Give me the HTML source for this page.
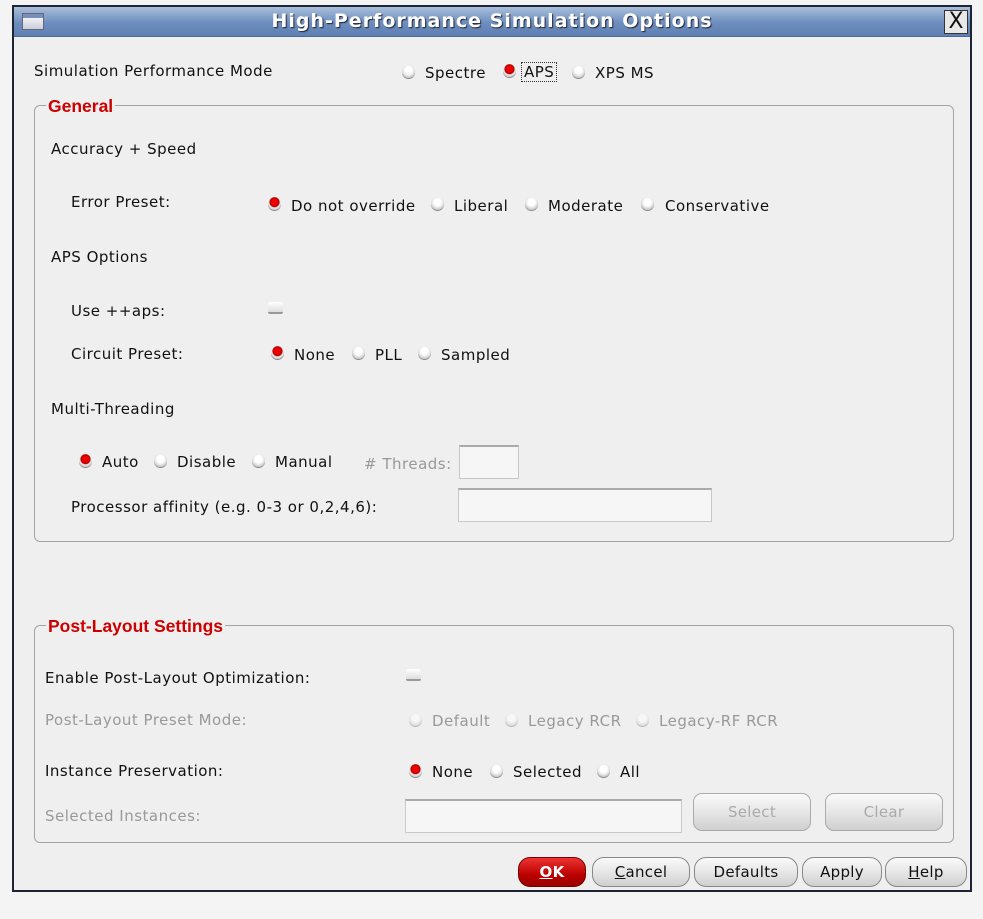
<!DOCTYPE html>
<html><head><meta charset="utf-8"><style>
*{box-sizing:border-box;margin:0;padding:0}
body{width:983px;height:919px;background:#f4f4f4;position:relative;overflow:hidden;font-family:"DejaVu Sans","Liberation Sans",sans-serif;font-size:15px;letter-spacing:0.5px;color:#111}
.win{position:absolute;left:12px;top:5px;width:960px;height:887px;border:2px solid #1d2433;background:#efefef}
.title{position:absolute;left:0;top:0;width:956px;height:30px;background:linear-gradient(#a9bfdc,#6c8dbd 55%,#5e80b2);border-bottom:1px solid #4a6a9a}
.title .t{position:absolute;left:0;right:0;top:3px;text-align:center;color:#fff;font-weight:bold;font-size:19px;letter-spacing:1px;text-shadow:1px 1px 1px #223}
.ticon{position:absolute;left:8px;top:6px;width:22px;height:17px;background:linear-gradient(#fff,#ccd);border:1px solid #667}
.ticon:before{content:"";position:absolute;left:0;right:0;top:0;height:4px;background:#7890b8}
.x{position:absolute;right:2px;top:3px;width:24px;height:24px;background:#e8e8e8;border:1px solid #333;font-size:22px;line-height:22px;text-align:center;color:#111;letter-spacing:0}
.a{position:absolute;white-space:nowrap;line-height:18px}
.g{color:#999}
.r{position:absolute;width:13px;height:13px;border-radius:50%;background:radial-gradient(circle at 50% 40%,#fff 35%,#ddd 60%,#999 100%);box-shadow:0 1px 0 #888}
.r.on{background:radial-gradient(circle at 50% 40%,#e00 30%,#a00 45%,#eee 55%,#999 100%)}
.r.dis{opacity:.55}
.cb{position:absolute;width:15px;height:12px;background:linear-gradient(#fff,#ddd);border-bottom:2px solid #999;border-radius:2px}
.box{position:absolute;border:1px solid #a4a4a4;border-radius:6px}
.leg{position:absolute;background:#efefef;color:#c00;font-weight:bold;padding:0 2px;line-height:18px;font-size:17.5px;letter-spacing:0;font-family:"Liberation Sans",sans-serif}
.in{position:absolute;background:#f6f6f6;border:1px solid #c8c8c8;border-top:2px solid #aaa}
.btn{position:absolute;height:30px;border:1px solid #888;border-radius:12px;background:linear-gradient(#fafafa,#e2e2e2 60%,#cfcfcf);text-align:center;line-height:28px;font-size:15px;letter-spacing:0.3px}
.btn.d{color:#aaa;border-color:#aaa;height:38px;line-height:36px;border-radius:9px}
.ok{background:linear-gradient(#e33,#b00 60%,#900);color:#fff;font-weight:bold;border-color:#700}
u{text-decoration:underline}
</style></head><body>
<div class="win">
<div class="title"><div class="ticon"></div><div class="t">High-Performance Simulation Options</div><div class="x">X</div></div>
</div>

<div class="a" style="left:34px;top:62px">Simulation Performance Mode</div>
<div class="r" style="left:402px;top:65px"></div><div class="a" style="left:425px;top:64px">Spectre</div>
<div class="r on" style="left:503px;top:64px"></div>
<div class="a" style="left:521px;top:62px;border:1px dotted #333;padding:0 2px">APS</div>
<div class="r" style="left:572px;top:65px"></div><div class="a" style="left:595px;top:64px">XPS MS</div>

<div class="box" style="left:34px;top:105px;width:920px;height:437px"></div>
<div class="leg" style="left:46px;top:97px">General</div>
<div class="a" style="left:51px;top:140px">Accuracy + Speed</div>
<div class="a" style="left:71px;top:193px">Error Preset:</div>
<div class="r on" style="left:268px;top:197px"></div><div class="a" style="left:291px;top:197px">Do not override</div>
<div class="r" style="left:431px;top:197px"></div><div class="a" style="left:454px;top:197px">Liberal</div>
<div class="r" style="left:525px;top:197px"></div><div class="a" style="left:548px;top:197px">Moderate</div>
<div class="r" style="left:641px;top:197px"></div><div class="a" style="left:665px;top:197px">Conservative</div>
<div class="a" style="left:51px;top:248px">APS Options</div>
<div class="a" style="left:71px;top:302px">Use ++aps:</div>
<div class="cb" style="left:268px;top:302px"></div>
<div class="a" style="left:71px;top:345px">Circuit Preset:</div>
<div class="r on" style="left:271px;top:346px"></div><div class="a" style="left:294px;top:346px">None</div>
<div class="r" style="left:352px;top:346px"></div><div class="a" style="left:375px;top:346px">PLL</div>
<div class="r" style="left:418px;top:346px"></div><div class="a" style="left:441px;top:346px">Sampled</div>
<div class="a" style="left:51px;top:400px">Multi-Threading</div>
<div class="r on" style="left:79px;top:454px"></div><div class="a" style="left:102px;top:453px">Auto</div>
<div class="r" style="left:154px;top:454px"></div><div class="a" style="left:177px;top:453px">Disable</div>
<div class="r" style="left:252px;top:454px"></div><div class="a" style="left:275px;top:453px">Manual</div>
<div class="a g" style="left:364px;top:455px">#&nbsp;Threads:</div>
<div class="in" style="left:459px;top:445px;width:60px;height:34px"></div>
<div class="a" style="left:71px;top:498px">Processor affinity (e.g. 0-3 or 0,2,4,6):</div>
<div class="in" style="left:458px;top:488px;width:254px;height:34px"></div>

<div class="box" style="left:34px;top:625px;width:920px;height:218px"></div>
<div class="leg" style="left:46px;top:617px">Post-Layout Settings</div>
<div class="a" style="left:45px;top:669px">Enable Post-Layout Optimization:</div>
<div class="cb" style="left:406px;top:669px"></div>
<div class="a g" style="left:45px;top:711px">Post-Layout Preset Mode:</div>
<div class="r dis" style="left:409px;top:713px"></div><div class="a g" style="left:432px;top:712px">Default</div>
<div class="r dis" style="left:505px;top:713px"></div><div class="a g" style="left:528px;top:712px">Legacy RCR</div>
<div class="r dis" style="left:636px;top:713px"></div><div class="a g" style="left:659px;top:712px">Legacy-RF RCR</div>
<div class="a" style="left:45px;top:762px">Instance Preservation:</div>
<div class="r on" style="left:409px;top:764px"></div><div class="a" style="left:432px;top:763px">None</div>
<div class="r" style="left:490px;top:764px"></div><div class="a" style="left:513px;top:763px">Selected</div>
<div class="r" style="left:597px;top:764px"></div><div class="a" style="left:620px;top:763px">All</div>
<div class="a g" style="left:45px;top:807px">Selected Instances:</div>
<div class="in" style="left:405px;top:799px;width:277px;height:34px"></div>
<div class="btn d" style="left:693px;top:793px;width:118px">Select</div>
<div class="btn d" style="left:825px;top:793px;width:118px">Clear</div>

<div class="btn ok" style="left:518px;top:857px;width:68px"><u>O</u>K</div>
<div class="btn" style="left:592px;top:857px;width:98px"><u>C</u>ancel</div>
<div class="btn" style="left:694px;top:857px;width:104px">Defaults</div>
<div class="btn" style="left:802px;top:857px;width:80px">Apply</div>
<div class="btn" style="left:885px;top:857px;width:82px"><u>H</u>elp</div>
</body></html>
